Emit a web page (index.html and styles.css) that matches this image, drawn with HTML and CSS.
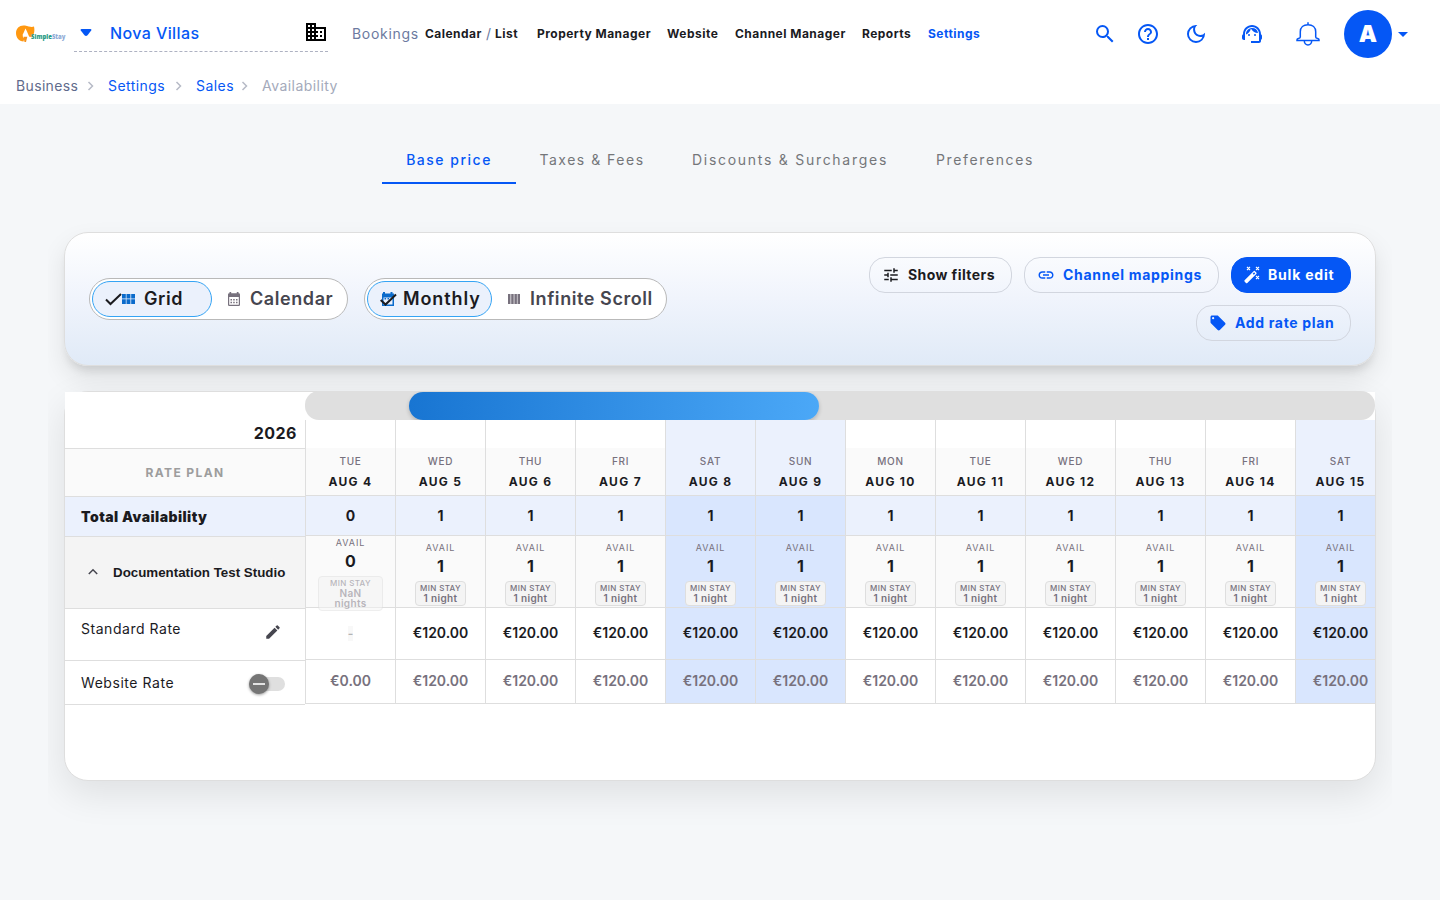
FILE: index.html
```html
<!DOCTYPE html>
<html lang="en">
<head>
<meta charset="utf-8">
<title>Availability</title>
<link rel="stylesheet" href="styles.css">
</head>
<body>
<header class="top">
  <div class="bar">
    <svg class="logo" width="50" height="20" viewBox="0 0 50 20"><path d="M9 1.500C4 .7 0 4 0 9c0 4.500 3 8.500 7.500 8.500l1-4 3-1 4 .5c2.500-2 3.500-6 2.500-10.500-2 1-5 .2-9-1z" fill="#ff9810"/><path d="M6.800 10.500 9.500 4.500l1.500 3 2.500 6-3 1.500c-3-.5-4-1.500-3.700-4.500z" fill="#fff"/><path d="M7.500 12.800h3.800L10 18H8.500z" fill="#f5921e"/><text x="15" y="15" class="logo-text" textLength="34.500" lengthAdjust="spacingAndGlyphs"><tspan fill="#299b86">Simple</tspan><tspan fill="#8fabd6">Stay</tspan></text></svg>
    <div class="picker">
      <svg class="pick-arrow" width="12" height="8" viewBox="0 0 12 8"><path d="M1.500 0h9q1.500 0 .7 1.500L7.500 6.200q-1.500 1.500-3 0L.8 1.500Q0 0 1.500 0z" fill="#0557f5"/></svg>
      <span class="pick-name">Nova Villas</span>
      <svg class="pick-icon" width="24" height="24" viewBox="0 0 24 24"><path d="M12 7V3H2v18h20V7H12zM6 19H4v-2h2v2zm0-4H4v-2h2v2zm0-4H4V9h2v2zm0-4H4V5h2v2zm4 12H8v-2h2v2zm0-4H8v-2h2v2zm0-4H8V9h2v2zm0-4H8V5h2v2zm10 12h-8v-2h2v-2h-2v-2h2v-2h-2V9h8v10zm-2-8h-2v2h2v-2zm0 4h-2v2h2v-2z"/></svg>
    </div>
    <nav class="nav">
      <span class="n-book">Bookings</span><b class="n-cal">Calendar</b><span class="n-slash">/</span><b class="n-list">List</b><b class="n-prop">Property Manager</b><b class="n-web">Website</b><b class="n-chan">Channel Manager</b><b class="n-rep">Reports</b><b class="n-set">Settings</b>
    </nav>
    <div class="tools">
      <svg class="t1" width="24" height="24" viewBox="0 0 24 24"><path d="M15.500 14h-.79l-.28-.27A6.471 6.471 0 0 0 16 9.500 6.500 6.500 0 1 0 9.500 16c1.610 0 3.090-.59 4.230-1.570l.27.28v.79l5 4.990L20.490 19l-4.990-5zm-6 0C7.010 14 5 11.990 5 9.500S7.010 5 9.500 5 14 7.010 14 9.500 11.990 14 9.500 14z"/></svg>
      <svg class="t2" width="24" height="24" viewBox="0 0 24 24"><path d="M11 18h2v-2h-2v2zm1-16C6.480 2 2 6.480 2 12s4.480 10 10 10 10-4.480 10-10S17.520 2 12 2zm0 18c-4.410 0-8-3.590-8-8s3.590-8 8-8 8 3.590 8 8-3.590 8-8 8zm0-14c-2.210 0-4 1.790-4 4h2c0-1.100.9-2 2-2s2 .9 2 2c0 2-3 1.750-3 5h2c0-2.250 3-2.500 3-5 0-2.210-1.790-4-4-4z"/></svg>
      <svg class="t3" width="24" height="24" viewBox="0 0 24 24"><path d="M9.370 5.510A7.350 7.350 0 0 0 9.100 7.500c0 4.080 3.320 7.400 7.400 7.400.68 0 1.350-.09 1.990-.27A7.014 7.014 0 0 1 12 19c-3.860 0-7-3.140-7-7 0-2.930 1.810-5.450 4.370-6.490zM12 3a9 9 0 1 0 9 9c0-.46-.04-.92-.1-1.360A5.389 5.389 0 0 1 16.500 12.900 5.403 5.403 0 0 1 13.360 3.100C12.920 3.040 12.460 3 12 3z"/></svg>
      <svg class="t4" width="24" height="24" viewBox="0 0 24 24"><path d="M21 12.220C21 6.730 16.740 3 12 3c-4.690 0-9 3.650-9 9.280-.6.340-1 .98-1 1.720v2c0 1.100.9 2 2 2h1v-6.100c0-3.870 3.130-7 7-7s7 3.130 7 7V19h-8v2h8c1.100 0 2-.9 2-2v-1.220c.59-.31 1-.92 1-1.640v-2.300c0-.7-.41-1.310-1-1.620z"/><circle cx="9" cy="13" r="1"/><circle cx="15" cy="13" r="1"/><path d="M18 11.030A6.040 6.040 0 0 0 12.050 6c-3.030 0-6.290 2.510-6.030 6.450a8.075 8.075 0 0 0 4.860-5.890c1.310 2.630 4 4.440 7.120 4.470z"/></svg>
      <svg class="t5" width="24" height="24" viewBox="0 0 24 24" fill="none" stroke="#0557f5" stroke-width="1.500"><path d="M12 .2v2.200M4.300 15V9.800C4.300 5.300 7.500 2.700 12 2.700s7.700 2.600 7.700 7.100V15c0 1 .8 1.300 2 1.400q1.300.2 1.300 1.300v.8H1v-.8q0-1.100 1.300-1.300c1.200-.1 2-.4 2-1.400zM8.300 18.700a3.700 4.200 0 0 0 7.400 0"/></svg>
      <span class="avatar">A</span>
      <svg width="10" height="5" viewBox="0 0 10 5"><path d="M0 0h10L5 5z"/></svg>
    </div>
  </div>
  <div class="crumbs">
    <span class="c1">Business</span><svg width="8" height="10" viewBox="0 0 8 10"><path d="m1.500 1 4 4-4 4"/></svg><a class="c2">Settings</a><svg width="8" height="10" viewBox="0 0 8 10"><path d="m1.500 1 4 4-4 4"/></svg><a class="c3">Sales</a><svg width="8" height="10" viewBox="0 0 8 10"><path d="m1.500 1 4 4-4 4"/></svg><span class="c4">Availability</span>
  </div>
</header>
<div class="tabs">
  <span class="tab w1 on">Base price</span><span class="tab w2">Taxes &amp; Fees</span><span class="tab w3">Discounts &amp; Surcharges</span><span class="tab w4">Preferences</span>
</div>
<main class="main">
  <section class="panel">
    <div class="switches">
      <div class="seg seg-a">
        <span class="opt on o1"><svg class="check" width="17" height="14" viewBox="0 0 17 14"><path d="M1 7.500 5.500 12 16 2" fill="none" stroke="#1b1b1f" stroke-width="2"/></svg><svg width="13" height="10" viewBox="0 0 13 10" fill="#0b6bcb"><path d="M0 0h3.800v4.600H0zM4.500 0h3.900v4.600H4.500zM9.200 0H13v4.600H9.200zM0 5.300h3.800V10H0zM4.500 5.300h3.900V10H4.500zM9.200 5.300H13V10H9.200z"/></svg><span class="lbl l1">Grid</span></span>
        <span class="opt o2"><svg width="12" height="14" viewBox="0 0 12 14" fill="#77717d"><path fill-rule="evenodd" d="M1.500 0h1.700v1.300h5.600V0h1.700v1.300h.3Q12 1.300 12 2.500V12.700Q12 14 10.800 14H1.200Q0 14 0 12.700V2.500Q0 1.300 1.200 1.300h.3zM1.200 5v7.700h9.600V5z"/><path d="M2.500 7H4v1.500H2.500zM5.200 7h1.500v1.500H5.200zM8 7h1.500v1.500H8zM2.500 9.800H4v1.500H2.500zM5.200 9.800h1.500v1.500H5.200zM8 9.800h1.500v1.500H8z"/></svg><span class="lbl l2">Calendar</span></span>
      </div>
      <div class="seg seg-b">
        <span class="opt on o3"><svg width="17" height="15" viewBox="0 0 17 15"><path fill-rule="evenodd" fill="#0b6bcb" d="M3 0h2v1.500h5.500V0h2v1.500H14v12.500H2V1.500h1zM3.500 5.500v7h9v-7z"/><path d="M.7 8 5.500 12.500 16 2.500" fill="none" stroke="#1b1b1f" stroke-width="2"/><path fill="#0b6bcb" d="M4.500 6h1.600v1.600H4.500zM7.500 6h1.600v1.600H7.500z"/></svg><span class="lbl l3">Monthly</span></span>
        <span class="opt o4"><svg width="12" height="10" viewBox="0 0 12 10" fill="#77717d"><path d="M0 0h2.500v10H0zM3.200 0h2.500v10H3.200zM6.400 0h2.500v10H6.400zM9.500 0H12v10H9.500z"/></svg><span class="lbl l4">Infinite Scroll</span></span>
      </div>
    </div>
    <div class="actions">
      <span class="btn b1"><svg width="18" height="18" viewBox="0 0 24 24" fill="#1b1b1f"><path d="M3 17v2h6v-2H3zM3 5v2h10V5H3zm10 16v-2h8v-2h-8v-2h-2v6h2zM7 9v2H3v2h4v2h2V9H7zm14 4v-2H11v2h10zm-6-4h2V7h4V5h-4V3h-2v6z"/></svg><span>Show filters</span></span>
      <span class="btn b2"><svg width="18" height="18" viewBox="0 0 24 24" fill="#0557f5"><path d="M3.900 12c0-1.710 1.390-3.100 3.100-3.100h4V7H7c-2.760 0-5 2.240-5 5s2.240 5 5 5h4v-1.900H7c-1.710 0-3.100-1.390-3.100-3.100zM8 13h8v-2H8v2zm9-6h-4v1.900h4c1.710 0 3.100 1.390 3.100 3.100s-1.390 3.100-3.100 3.100h-4V17h4c2.760 0 5-2.240 5-5s-2.240-5-5-5z"/></svg><span>Channel mappings</span></span>
      <span class="btn b3"><svg width="18" height="18" viewBox="0 0 18 18" fill="#fff"><path fill-rule="evenodd" d="m1.600 14.200 9-9q.7-.7 1.400 0l1.300 1.300q.7.700 0 1.400l-9 9q-.7.700-1.400 0l-1.300-1.300q-.7-.7 0-1.400zM9.700 7.700l1.100 1.100 1.400-1.400-1.100-1.100z"/><path d="m4 1 3 3m0-3L4 4m9-3 3 3m0-3-3 3m0 6 3 3m0-3-3 3" stroke="#fff" stroke-width="1.100"/></svg><span>Bulk edit</span></span>
      <span class="btn b4"><svg width="18" height="18" viewBox="0 0 24 24" fill="#0557f5"><path d="m21.410 11.580-9-9C12.050 2.220 11.550 2 11 2H4c-1.100 0-2 .9-2 2v7c0 .55.22 1.050.59 1.420l9 9c.36.36.86.58 1.410.58s1.050-.22 1.410-.59l7-7c.37-.36.59-.86.59-1.410s-.23-1.060-.59-1.420zM5.500 7a1.500 1.500 0 1 1 0-3 1.500 1.500 0 0 1 0 3z"/></svg><span>Add rate plan</span></span>
    </div>
  </section>
  <section class="board">
    <div class="side">
      <div class="s-year">2026</div>
      <div class="s-plan">RATE PLAN</div>
      <div class="s-total">Total Availability</div>
      <div class="s-unit"><svg width="10" height="7" viewBox="0 0 10 7"><path d="m.8 6 4.200-4.200L9.200 6" fill="none" stroke="#46464f" stroke-width="1.500"/></svg><span>Documentation Test Studio</span></div>
      <div class="s-rate"><span>Standard Rate</span><svg width="18" height="18" viewBox="0 0 24 24" fill="#46464f"><path d="M3 17.250V21h3.750L17.810 9.940l-3.750-3.750L3 17.250zM20.710 7.040a.996.996 0 0 0 0-1.410l-2.340-2.340a.996.996 0 0 0-1.410 0l-1.830 1.830 3.750 3.750 1.830-1.830z"/></svg></div>
      <div class="s-web"><span>Website Rate</span><i class="toggle"><i class="knob"></i></i></div>
    </div>
    <div class="right">
      <div class="track"><div class="thumb"></div></div>
      <div class="days" id="days"></div>
    </div>
  </section>
</main>
<script src="script.js"></script>
</body>
</html>
```

FILE: styles.css
```css
* { box-sizing: border-box; }
body { margin: 0; height: 900px; overflow: hidden; background: #f5f7f9; font-family: Inter, sans-serif; color: #1b1b1f; }
p { margin: 0; }
svg { flex: none; display: block; }
.top { height: 104px; background: #fff; }
.bar { display: flex; height: 68px; padding-left: 16px; }
.logo { margin-top: 24px; margin-right: 8px; }
.logo-text { font: 800 6.500px "Open Sans", sans-serif; }
.picker { width: 254px; height: 52px; border-bottom: 1px dashed #aeb2c2; display: flex; align-items: flex-start; padding-left: 6px; }
.pick-arrow { margin-top: 29px; }
.pick-name { margin: 21px 0 0 18px; width: 193px; font-size: 16px; line-height: 24px; font-weight: 500; color: #0557f5; letter-spacing: .4px; }
.pick-icon { margin-top: 20px; margin-left: 1px; }
.nav { display: flex; width: 744px; padding: 0 0 2px 24px; height: 68px; align-items: center; font-size: 12px; white-space: nowrap; }
.nav > * { flex: none; }
.nav b { font-weight: 700; letter-spacing: .47px; }
.n-book { width: 73px; font-size: 14px; color: #6c7aa0; letter-spacing: .7px; }
.n-cal { width: 61px; }
.n-slash { width: 9px; font-size: 14px; color: #6c7aa0; }
.n-list { width: 42px; }
.n-prop { width: 130px; }
.n-web { width: 68px; }
.n-chan { width: 127px; }
.n-rep { width: 66px; }
.n-set { color: #0557f5; }
.tools { display: flex; align-items: center; fill: #0557f5; padding-left: 21px; }
.t1 { margin-right: 19px; }
.t2 { margin-right: 24px; }
.t3 { margin-right: 32px; }
.t4 { margin-right: 32px; }
.t5 { margin-right: 24px; }
.avatar { width: 48px; height: 48px; border-radius: 50%; background: #0557f5; color: #fff; font-weight: 900; font-size: 23px; line-height: 49px; text-align: center; margin-right: 6px; }
.crumbs { display: flex; align-items: center; padding: 8px 0 0 16px; font-size: 14px; line-height: 20px; color: #5f6b8c; letter-spacing: .45px; }
.crumbs a { color: #0557f5; }
.crumbs svg { fill: none; stroke: #b6bac6; stroke-width: 1.500; margin-right: 13px; }
.c1 { width: 71px; letter-spacing: .35px; }
.c2 { width: 67px; }
.c3 { width: 45px; }
.crumbs .c4 { color: #a4aabb; }
.tabs { display: flex; padding: 32px 0 0 382px; height: 128px; }
.tab { height: 48px; line-height: 48px; text-align: center; font-size: 14px; letter-spacing: 1.5px; color: #747679; white-space: nowrap; }
.tab.on { color: #0557f5; font-weight: 500; border-bottom: 2px solid #0557f5; }
.w1 { width: 134px; }
.w2 { width: 152px; }
.w3 { width: 244px; letter-spacing: 1.720px; }
.w4 { width: 146px; letter-spacing: 1.650px; }
.main { margin: 0 48px; padding: 0 16px; height: 668px; overflow-x: clip; }
.panel { display: flex; justify-content: space-between; height: 134px; padding: 24px; border: 1px solid #dedede; border-radius: 24px; background: linear-gradient(#fff, #f0f4fc 50%, #e0eaf7); box-shadow: 0 8px 10px -4px rgba(0,0,0,.12), 0 12px 24px 2px rgba(0,0,0,.08); }
.switches { display: flex; gap: 16px; align-items: center; }
.seg { display: flex; height: 42px; border: 1px solid #b9b9b9; border-radius: 21px; background: #fff; padding: 2px; }
.seg-a { width: 259px; }
.seg-b { width: 303px; }
.opt { display: flex; align-items: center; font-size: 18px; font-weight: 600; color: #46464f; white-space: nowrap; }
.opt.on { height: 36px; border: 1px solid #35a4f4; border-radius: 18px; background: #ebf1fc; color: #1b1b1f; }
.lbl { padding-bottom: 1px; letter-spacing: .58px; }
.o1 { width: 120px; padding-left: 12px; }
.o2 { padding-left: 16px; }
.o3 { width: 125px; padding-left: 12px; }
.o4 { padding-left: 16px; }
.l1 { margin-left: 9px; }
.l2 { margin-left: 10px; }
.l3 { margin-left: 6px; letter-spacing: .9px; }
.l4 { margin-left: 10px; }
.actions { width: 490px; display: flex; flex-wrap: wrap; justify-content: flex-end; align-content: flex-start; gap: 12px; }
.btn { height: 36px; border: 1px solid #d2d6df; border-radius: 16px; display: flex; align-items: center; gap: 8px; padding-left: 12px; font-size: 14px; font-weight: 700; color: #0557f5; white-space: nowrap; letter-spacing: .65px; }
.btn span { padding-bottom: 1px; }
.b1 { width: 143px; color: #1b1b1f; letter-spacing: .42px; }
.b2 { width: 195px; letter-spacing: .7px; }
.b3 { width: 120px; gap: 7px; padding-left: 11px; background: #0557f5; border-color: #0557f5; color: #fff; letter-spacing: .8px; }
.b4 { width: 155px; }
.board { margin-top: 25px; height: 390px; display: flex; border: 1px solid #dedede; border-radius: 24px; background: #fff; box-shadow: 0 12px 36px 2px rgba(0,0,0,.09); }
.side { width: 240px; flex: none; background: #fff; height: 313px; }
.side > div { border-bottom: 1px solid #dedede; }
.s-year { height: 57px; padding: 31px 8px 0 0; text-align: right; font-size: 16px; line-height: 20px; font-weight: 700; letter-spacing: .5px; }
.s-plan { height: 48px; line-height: 47px; text-align: center; background: #fafafa; color: #9d9d9d; font-size: 12px; font-weight: 700; letter-spacing: 1.400px; }
.s-total { height: 40px; line-height: 40px; padding-left: 16px; background: #ebf1fd; font-size: 14px; font-weight: 900; letter-spacing: .45px; }
.s-unit { height: 72px; display: flex; align-items: center; background: #f4f4f4; padding-left: 23px; font: 700 13.330px "Liberation Sans", sans-serif; gap: 15px; }
.s-unit svg { margin-bottom: 3px; }
.s-rate { height: 52px; display: flex; justify-content: space-between; padding: 10px 23px 0 16px; font-size: 14px; line-height: 20px; letter-spacing: .53px; }
.s-rate svg { margin-top: 4px; }
.s-web { height: 44px; display: flex; align-items: center; justify-content: space-between; padding: 2px 20px 0 16px; font-size: 14px; letter-spacing: .55px; }
.s-web span { padding-bottom: 2px; }
.toggle { width: 36px; height: 14px; border-radius: 7px; background: #dfdfdf; display: flex; align-items: center; }
.knob { width: 20px; height: 20px; border-radius: 50%; background: linear-gradient(#e3e3e3, #e3e3e3) center / 12px 2px no-repeat #757575; box-shadow: 0 1px 3px rgba(0,0,0,.4); }
.right { flex: 1; min-width: 0; background: #fff; height: 312px; }
.track { height: 29px; margin-top: -1px; padding: 1px 0 0 104px; border-radius: 14px; background: #dfdfdf; }
.thumb { width: 410px; height: 28px; border-radius: 14px; background: linear-gradient(90deg, #1875d2, #4ba8f7); box-shadow: 0 2px 4px rgba(0,0,0,.2); }
.days { display: flex; overflow: hidden; }
.day { flex: none; width: 90px; border-left: 1px solid #dedede; text-align: center; }
.day > div { border-bottom: 1px solid #dedede; }
.head { height: 76px; padding-top: 34px; background: linear-gradient(#fff 28px, #fafafa 28px); }
.dow { font-size: 10px; line-height: 14px; font-weight: 500; color: #77717d; letter-spacing: .7px; }
.date { font-size: 12px; line-height: 16px; margin-top: 6px; font-weight: 700; letter-spacing: 1.300px; }
.tot { height: 40px; line-height: 40px; font-size: 14px; font-weight: 700; background: #ebf1fd; }
.unit { height: 72px; background: #fafafa; display: flex; flex-direction: column; align-items: center; justify-content: center; padding-top: 3px; }
.av { font-size: 9px; line-height: 12px; color: #77717d; letter-spacing: .9px; margin-top: 1px; }
.num { font-size: 16px; line-height: 24px; font-weight: 700; margin-bottom: 3px; }
.chip { flex: none; width: 51px; height: 25px; border: 1px solid #dedede; border-radius: 4px; background: #f4f4f4; color: #77717d; padding-top: 2px; font-size: 10px; line-height: 10px; font-weight: 600; white-space: nowrap; letter-spacing: .35px; }
.chip small { display: block; font-size: 8px; line-height: 9px; font-weight: 500; letter-spacing: .35px; }
.nan { width: 65px; height: 35px; opacity: .5; position: relative; }
.price { height: 52px; line-height: 50px; font-size: 14px; font-weight: 600; }
.price s { text-decoration: none; background: #f8f8f8; color: #b4b4b4; font-size: 12px; }
.web { height: 44px; line-height: 42px; font-size: 14px; font-weight: 600; color: #77717d; }
.we .head { background: #ebf1fd; }
.we .tot, .we .unit, .we .price, .we .web { background: #d9e6fe; }
```

FILE: script.js
```js
const names = ["TUE", "WED", "THU", "FRI", "SAT", "SUN", "MON"];
let html = "";
for (let i = 0; i < 12; i++) {
  const dow = names[i % 7];
  const closed = i === 0;
  html += `<div class="day${dow === "SAT" || dow === "SUN" ? " we" : ""}">
    <div class="head"><p class="dow">${dow}</p><p class="date">AUG ${i + 4}</p></div>
    <div class="tot">${closed ? 0 : 1}</div>
    <div class="unit"><span class="av">AVAIL</span><span class="num">${closed ? 0 : 1}</span>
      <span class="chip${closed ? " nan" : ""}"><small>MIN STAY</small>${closed ? "NaN<br>nights" : "1 night"}</span></div>
    <div class="price">${closed ? "<s>-</s>" : "€120.00"}</div>
    <div class="web">${closed ? "€0.00" : "€120.00"}</div>
  </div>`;
}
document.getElementById("days").innerHTML = html;
```
